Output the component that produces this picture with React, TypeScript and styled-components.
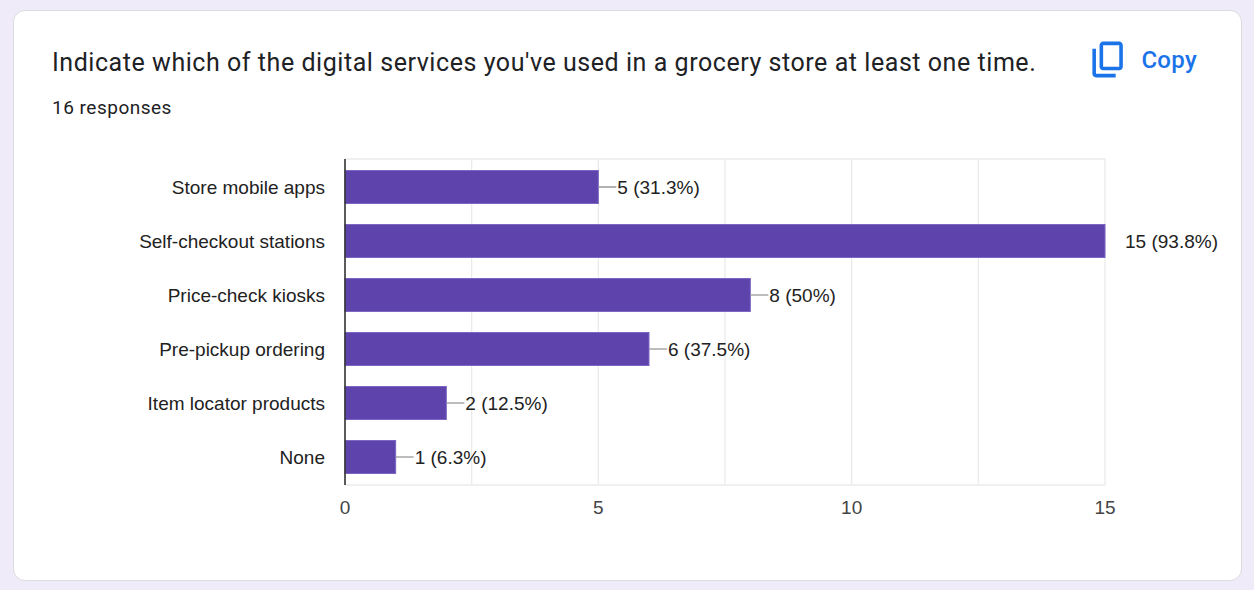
import styled, { createGlobalStyle } from 'styled-components';

const GlobalStyle = createGlobalStyle`
  body {
    margin: 0;
    background: #f0ebf8;
    font-family: Roboto, "Liberation Sans", Arial, sans-serif;
  }
`;

const rows = [
  { label: 'Store mobile apps', value: 5, pct: '31.3%' },
  { label: 'Self-checkout stations', value: 15, pct: '93.8%' },
  { label: 'Price-check kiosks', value: 8, pct: '50%' },
  { label: 'Pre-pickup ordering', value: 6, pct: '37.5%' },
  { label: 'Item locator products', value: 2, pct: '12.5%' },
  { label: 'None', value: 1, pct: '6.3%' },
];

// chart geometry, in svg coordinates
const X0 = 331;
const X1 = 1091;
const Y0 = 19;
const Y1 = 345;
const MAX = 15;
const unit = (X1 - X0) / MAX;
const ROW = 54;
const FIRST = 47;
const BAR_H = 33;

const CopyIcon = () => (
  <svg width="43" height="43" viewBox="0 -960 960 960" fill="#1a73e8">
    <path d="M360-240q-33 0-56.5-23.5T280-320v-480q0-33 23.5-56.5T360-880h360q33 0 56.5 23.5T800-800v480q0 33-23.5 56.5T720-240H360Zm0-80h360v-480H360v480ZM200-80q-33 0-56.5-23.5T120-160v-560h80v560h440v80H200Zm160-240v-480 480Z" />
  </svg>
);

const BarChart = () => (
  <svg width="1227" height="420" viewBox="0 0 1227 420">
    {[1, 2, 3, 4, 5, 6].map((i) => (
      <line
        key={i}
        x1={X0 + i * 2.5 * unit}
        x2={X0 + i * 2.5 * unit}
        y1={Y0}
        y2={Y1}
        stroke="#ebebeb"
        strokeWidth="1.3"
      />
    ))}
    <line x1={X0} x2={X1} y1={Y0} y2={Y0} stroke="#ebebeb" strokeWidth="1.3" />
    <line x1={X0} x2={X1} y1={Y1} y2={Y1} stroke="#ebebeb" strokeWidth="1.3" />
    {rows.map((r, i) => {
      const cy = FIRST + i * ROW;
      const end = X0 + r.value * unit;
      const textX = r.value === MAX ? end + 20 : end + 19;
      return (
        <g key={r.label}>
          <text
            x={311}
            y={cy}
            textAnchor="end"
            dominantBaseline="central"
            fontFamily='"Liberation Sans", Arial, sans-serif'
            fontSize="19"
            fill="#222"
          >
            {r.label}
          </text>
          <rect
            x={X0}
            y={cy - BAR_H / 2}
            width={end - X0}
            height={BAR_H}
            fill="#5e43ad"
            stroke="#7b67c2"
            strokeWidth="1"
          />
          {r.value !== MAX && (
            <line x1={end} x2={end + 18} y1={cy} y2={cy} stroke="#999" strokeWidth="1.3" />
          )}
          <text
            x={textX}
            y={cy}
            dominantBaseline="central"
            fontFamily='"Liberation Sans", Arial, sans-serif'
            fontSize="19"
            fill="#222"
          >
            {r.value} ({r.pct})
          </text>
        </g>
      );
    })}
    <line x1={X0} x2={X0} y1={Y0} y2={Y1} stroke="#333" strokeWidth="1.6" />
    {[0, 5, 10, 15].map((t) => (
      <text
        key={t}
        x={X0 + t * unit}
        y={367}
        textAnchor="middle"
        dominantBaseline="central"
        fontFamily='"Liberation Sans", Arial, sans-serif'
        fontSize="19"
        fill="#444"
      >
        {t}
      </text>
    ))}
  </svg>
);

export default function App() {
  return (
    <>
      <GlobalStyle />
      <Card>
        <Header>
          <Titles>
            <Title>Indicate which of the digital services you've used in a grocery store at least one time.</Title>
            <Responses>16 responses</Responses>
          </Titles>
          <CopyButton>
            <CopyIcon />
            <span>Copy</span>
          </CopyButton>
        </Header>
        <ChartWrap>
          <BarChart />
        </ChartWrap>
      </Card>
    </>
  );
}

const Card = styled.section`
  box-sizing: border-box;
  margin: 10px 12px 9px 13px;
  height: 571px;
  background: #fff;
  border: 1px solid #dadce0;
  border-radius: 12px;
  overflow: hidden;
`;

const Header = styled.div`
  display: flex;
  justify-content: space-between;
  align-items: flex-start;
  padding: 36px 44px 0 38px;
`;

const Titles = styled.div`
  display: flex;
  flex-direction: column;
`;

const Title = styled.h1`
  margin: 0;
  font-size: 25px;
  line-height: 32px;
  font-weight: 400;
  letter-spacing: 0.55px;
  color: #202124;
  white-space: nowrap;
`;

const Responses = styled.div`
  margin-top: 17px;
  font-size: 19px;
  line-height: 24px;
  color: #202124;
  letter-spacing: 0.5px;
`;

const CopyButton = styled.button`
  display: flex;
  align-items: center;
  gap: 11px;
  margin-top: -9px;
  padding: 0;
  border: none;
  background: none;
  color: #1a73e8;
  font-family: Roboto, "Open Sans", sans-serif;
  font-size: 24px;
  font-weight: 500;
  letter-spacing: 0.3px;
  cursor: pointer;
`;

const ChartWrap = styled.div`
  margin-top: 20px;
`;
